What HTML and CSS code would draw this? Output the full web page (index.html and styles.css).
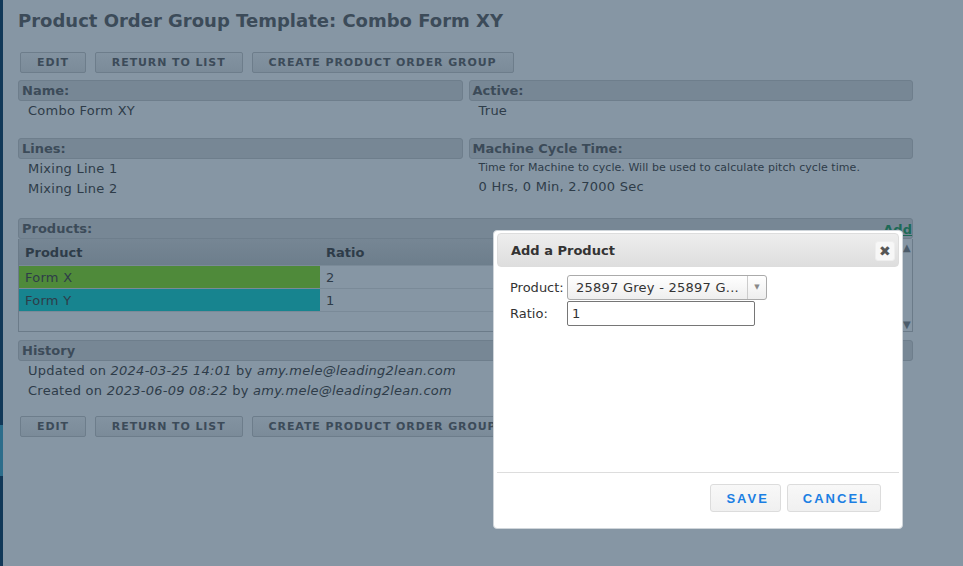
FILE: index.html
```html
<!DOCTYPE html>
<html lang="en">
<head>
  <meta charset="UTF-8" />
  <meta name="viewport" content="width=device-width, initial-scale=1.0"/>
  <title>Product Order Group Template</title>
  <link rel="stylesheet" href="styles.css">
</head>
<body>
  <div class="layout">
    <aside class="rail"><span class="rail-mark"></span></aside>

    <main class="page">
      <h1 class="title">Product Order Group Template: Combo Form XY</h1>

      <div class="actions">
        <button class="btn">Edit</button>
        <button class="btn">Return to List</button>
        <button class="btn">Create Product Order Group</button>
      </div>

      <div class="fields">
        <section class="field">
          <div class="field-head">Name:</div>
          <div class="field-value">Combo Form XY</div>
        </section>
        <section class="field">
          <div class="field-head">Active:</div>
          <div class="field-value">True</div>
        </section>
        <section class="field">
          <div class="field-head">Lines:</div>
          <div class="field-value">Mixing Line 1</div>
          <div class="field-value">Mixing Line 2</div>
        </section>
        <section class="field">
          <div class="field-head">Machine Cycle Time:</div>
          <div class="field-note">Time for Machine to cycle. Will be used to calculate pitch cycle time.</div>
          <div class="field-value">0 Hrs, 0 Min, 2.7000 Sec</div>
        </section>
      </div>

      <section class="field">
        <div class="field-head">Products: <a class="add-link" href="#">Add</a></div>
        <div class="grid-wrap">
          <table class="grid">
            <thead>
              <tr><th class="col-product">Product</th><th>Ratio</th></tr>
            </thead>
            <tbody>
              <tr><td class="swatch-green">Form X</td><td>2</td></tr>
              <tr><td class="swatch-teal">Form Y</td><td>1</td></tr>
            </tbody>
          </table>
          <div class="scroll">
            <span>&#9650;</span>
            <span>&#9660;</span>
          </div>
        </div>
      </section>

      <section class="field history">
        <div class="field-head">History</div>
        <div class="field-value">Updated on <em>2024-03-25 14:01</em> by <em>amy.mele@leading2lean.com</em></div>
        <div class="field-value">Created on <em>2023-06-09 08:22</em> by <em>amy.mele@leading2lean.com</em></div>
      </section>

      <div class="actions bottom">
        <button class="btn">Edit</button>
        <button class="btn">Return to List</button>
        <button class="btn">Create Product Order Group</button>
      </div>
    </main>
  </div>

  <!-- modal: add a product -->
  <div class="dialog">
    <div class="dialog-head">
      <span>Add a Product</span>
      <button class="dialog-close">&#10006;</button>
    </div>
    <div class="dialog-body">
      <label class="form-label">Product:</label>
      <div class="picker">
        <span class="picker-text">25897 Grey - 25897 G...</span>
        <span class="picker-arrow">&#9660;</span>
      </div>
      <label class="form-label">Ratio:</label>
      <input class="ratio-input" type="text" value="1" />
    </div>
    <div class="dialog-foot">
      <button class="dlg-btn save">Save</button>
      <button class="dlg-btn cancel">Cancel</button>
    </div>
  </div>
</body>
</html>
```

FILE: styles.css
```css
body {
  margin: 0;
  font-family: 'DejaVu Sans', Verdana, sans-serif;
  font-size: 13px;
  letter-spacing: 0.25px;
  color: #2e3c49;
  background-color: #8696a4;
}

.layout {
  display: flex;
  min-height: 566px;
}

.rail {
  width: 3px;
  flex: none;
  background: #113858;
  padding-top: 425px;
  box-sizing: border-box;
}

.rail-mark {
  display: block;
  height: 51px;
  background: #2c6d8b;
}

.page {
  width: 895px;
  padding: 10px 0 0 15px;
}

.title {
  margin: 0 0 20px;
  font-size: 18px;
  line-height: 22px;
  letter-spacing: 0;
  color: #3c4b59;
}

.actions {
  display: flex;
  gap: 9px;
  padding-left: 2px;
  margin-bottom: 7px;
}

.actions.bottom {
  margin-top: 15px;
}

.btn {
  height: 21px;
  padding: 0 16px;
  font-family: 'DejaVu Sans', Verdana, sans-serif;
  font-size: 11px;
  font-weight: bold;
  letter-spacing: 0.9px;
  text-transform: uppercase;
  color: #3c4b59;
  background: linear-gradient(#8393a1, #7b8b99);
  border: 1px solid #6d7d8b;
  border-radius: 2px;
}

.fields {
  display: grid;
  grid-template-columns: 1fr 1fr;
  column-gap: 6px;
  row-gap: 17px;
  margin-bottom: 19px;
}

.field-head {
  position: relative;
  height: 21px;
  box-sizing: border-box;
  padding-left: 3px;
  line-height: 19px;
  font-weight: bold;
  letter-spacing: 0;
  color: #3c4b59;
  background: #778795;
  border: 1px solid #6e7e8c;
  border-radius: 3px;
}

.field-value {
  padding-left: 10px;
  line-height: 20px;
}

.field-note {
  padding-left: 10px;
  font-size: 11px;
  line-height: 18px;
  letter-spacing: 0.05px;
}

.add-link {
  position: absolute;
  right: 0;
  top: 1px;
  color: #1d6a57;
  font-weight: bold;
}

.grid-wrap {
  display: flex;
  height: 93px;
  box-sizing: border-box;
  border: 1px solid #6b7b89;
  border-top: 0;
}

.grid {
  flex: 1;
  border-collapse: collapse;
  align-self: flex-start;
}

.grid th {
  height: 26px;
  padding: 0 6px;
  text-align: left;
  letter-spacing: 0;
  color: #2e3c49;
  background: linear-gradient(#768694, #6d7e8c);
}

.grid .col-product {
  width: 289px;
}

.grid td {
  height: 22px;
  padding: 0 6px;
  border-top: 1px solid #7a8a98;
  border-bottom: 1px solid #7a8a98;
}

.swatch-green {
  background: #4f8a3a;
}

.swatch-teal {
  background: #17848f;
}

.scroll {
  width: 10px;
  display: flex;
  flex-direction: column;
  justify-content: space-between;
  padding: 3px 0 1px;
  font-size: 10px;
  color: #4c5c6a;
  text-align: center;
}

.history {
  margin-top: 8px;
}

/* dialog */
.dialog {
  position: absolute;
  left: 493px;
  top: 230px;
  width: 410px;
  height: 299px;
  box-sizing: border-box;
  display: flex;
  flex-direction: column;
  padding: 2px 3px 0;
  background: #fff;
  border: 1px solid #cfd5da;
  border-radius: 4px;
  color: #333;
  letter-spacing: 0;
}

.dialog-head {
  height: 34px;
  box-sizing: border-box;
  display: flex;
  align-items: center;
  justify-content: space-between;
  padding: 0 3px 0 13px;
  font-weight: bold;
  background: linear-gradient(#eeeeee, #dedede);
  border: 1px solid #dddddd;
  border-radius: 4px;
}

.dialog-close {
  width: 20px;
  height: 20px;
  padding: 0;
  margin-top: 2px;
  font-size: 14px;
  line-height: 18px;
  color: #555;
  background: #f7f7f7;
  border: 1px solid #eeeeee;
  border-radius: 3px;
}

.dialog-body {
  flex: 1;
  display: grid;
  grid-template-columns: 57px auto;
  grid-auto-rows: 25px;
  row-gap: 1px;
  align-content: start;
  align-items: center;
  padding: 8px 13px 0;
}

.form-label {
  line-height: 20px;
}

.picker {
  width: 200px;
  height: 25px;
  box-sizing: border-box;
  display: flex;
  align-items: center;
  border: 1px solid #aaa;
  border-radius: 3px;
  background: linear-gradient(#ffffff, #eeeeee);
}

.picker-text {
  flex: 1;
  padding-left: 8px;
  letter-spacing: 0.25px;
}

.picker-arrow {
  width: 18px;
  height: 23px;
  line-height: 23px;
  text-align: center;
  font-size: 7px;
  color: #888;
  border-left: 1px solid #ccc;
}

.ratio-input {
  width: 188px;
  height: 25px;
  box-sizing: border-box;
  padding: 0 4px;
  font-family: 'DejaVu Sans', Verdana, sans-serif;
  font-size: 13px;
  color: #333;
  border: 1px solid #767676;
  border-radius: 2px;
}

.dialog-foot {
  display: flex;
  justify-content: flex-end;
  gap: 6px;
  padding: 11px 18px 16px;
  border-top: 1px solid #dddddd;
}

.dlg-btn {
  height: 28px;
  padding: 0 11px 0 15px;
  font-family: 'Liberation Sans', Arial, sans-serif;
  font-size: 13px;
  font-weight: bold;
  letter-spacing: 2px;
  text-transform: uppercase;
  color: #1b7fe3;
  background: linear-gradient(#f8f8f8, #f0f0f0);
  border: 1px solid #dcdcdc;
  border-radius: 3px;
}
```
